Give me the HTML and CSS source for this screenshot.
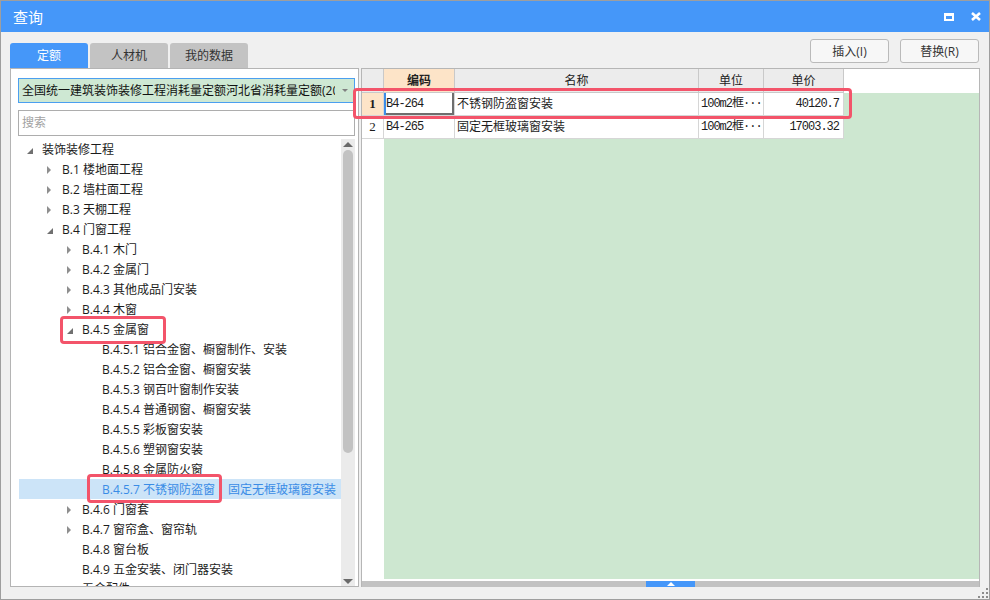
FILE: index.html
```html
<!DOCTYPE html>
<html lang="zh-CN">
<head>
<meta charset="utf-8">
<title>查询</title>
<link rel="stylesheet" href="styles.css">
</head>
<body>
<div class="window">
  <div class="titlebar">
    <span class="title">查询</span>
    <div class="win-btns">
      <svg class="ico" width="10" height="8" viewBox="0 0 10 8"><path d="M0 0H10V8H0Z M2 3V6H8V3Z" fill="#fff" fill-rule="evenodd"/></svg>
      <svg class="ico" width="10" height="9" viewBox="0 0 10 9"><path d="M1 1L9 8M9 1L1 8" stroke="#fff" stroke-width="2.6" fill="none"/></svg>
    </div>
  </div>
  <div class="main">
    <div class="left-col">
      <div class="tabs">
        <div class="tab active">定额</div>
        <div class="tab">人材机</div>
        <div class="tab">我的数据</div>
      </div>
      <div class="panel">
        <div class="combo">
          <span class="combo-text">全国统一建筑装饰装修工程消耗量定额河北省消耗量定额(2012)</span>
          <span class="combo-btn"><span class="tri-down"></span></span>
        </div>
        <div class="search">搜索</div>
        <div class="tree-wrap">
          <div class="tree">
            <div class="row l0"><span class="tog"><span class="exp"></span></span><span>装饰装修工程</span></div>
            <div class="row l1"><span class="tog"><span class="col"></span></span><span>B.1 楼地面工程</span></div>
            <div class="row l1"><span class="tog"><span class="col"></span></span><span>B.2 墙柱面工程</span></div>
            <div class="row l1"><span class="tog"><span class="col"></span></span><span>B.3 天棚工程</span></div>
            <div class="row l1"><span class="tog"><span class="exp"></span></span><span>B.4 门窗工程</span></div>
            <div class="row l2"><span class="tog"><span class="col"></span></span><span>B.4.1 木门</span></div>
            <div class="row l2"><span class="tog"><span class="col"></span></span><span>B.4.2 金属门</span></div>
            <div class="row l2"><span class="tog"><span class="col"></span></span><span>B.4.3 其他成品门安装</span></div>
            <div class="row l2"><span class="tog"><span class="col"></span></span><span>B.4.4 木窗</span></div>
            <div class="row l2"><span class="tog"><span class="exp"></span></span><span>B.4.5 金属窗</span></div>
            <div class="row l3"><span class="tog"></span><span>B.4.5.1 铝合金窗、橱窗制作、安装</span></div>
            <div class="row l3"><span class="tog"></span><span>B.4.5.2 铝合金窗、橱窗安装</span></div>
            <div class="row l3"><span class="tog"></span><span>B.4.5.3 钢百叶窗制作安装</span></div>
            <div class="row l3"><span class="tog"></span><span>B.4.5.4 普通钢窗、橱窗安装</span></div>
            <div class="row l3"><span class="tog"></span><span>B.4.5.5 彩板窗安装</span></div>
            <div class="row l3"><span class="tog"></span><span>B.4.5.6 塑钢窗安装</span></div>
            <div class="row l3"><span class="tog"></span><span>B.4.5.8 金属防火窗</span></div>
            <div class="row l3 sel"><span class="tog"></span><span>B.4.5.7 不锈钢防盗窗</span><span class="extra">固定无框玻璃窗安装</span></div>
            <div class="row l2"><span class="tog"><span class="col"></span></span><span>B.4.6 门窗套</span></div>
            <div class="row l2"><span class="tog"><span class="col"></span></span><span>B.4.7 窗帘盒、窗帘轨</span></div>
            <div class="row l2"><span class="tog"></span><span>B.4.8 窗台板</span></div>
            <div class="row l2"><span class="tog"></span><span>B.4.9 五金安装、闭门器安装</span></div>
            <div class="row l2 last"><span class="tog"></span><span>五金配件</span></div>
          </div>
          <div class="vscroll">
            <div class="sb-btn"><span class="sb-up"></span></div>
            <div class="sb-track"><div class="sb-thumb"></div></div>
            <div class="sb-btn"><span class="sb-down"></span></div>
          </div>
        </div>
      </div>
    </div>
    <div class="right-col">
      <div class="actions">
        <button class="btn">插入(I)</button>
        <button class="btn">替换(R)</button>
      </div>
      <div class="grid">
        <div class="ghead">
          <div class="hc c-num"></div>
          <div class="hc c-code cur">编码</div>
          <div class="hc c-name">名称</div>
          <div class="hc c-unit">单位</div>
          <div class="hc c-price">单价</div>
          <div class="hfill"></div>
        </div>
        <div class="grow">
          <div class="gc c-num rn cur">1</div>
          <div class="gc c-code mono focus">B4-264</div>
          <div class="gc c-name">不锈钢防盗窗安装</div>
          <div class="gc c-unit mono">100m2框···</div>
          <div class="gc c-price mono num">40120.7</div>
          <div class="gfill-green"></div>
        </div>
        <div class="grow">
          <div class="gc c-num rn">2</div>
          <div class="gc c-code mono">B4-265</div>
          <div class="gc c-name">固定无框玻璃窗安装</div>
          <div class="gc c-unit mono">100m2框···</div>
          <div class="gc c-price mono num">17003.32</div>
          <div class="gfill-green"></div>
        </div>
        <div class="gbody-fill">
          <div class="c-num"></div>
          <div class="gfill-green"></div>
        </div>
        <div class="gstrip"></div>
        <div class="hscroll"><div class="hthumb"><span class="hthumb-arrow"></span></div></div>
      </div>
    </div>
  </div>
  <div class="mark mark-row"></div>
  <div class="mark mark-node"></div>
  <div class="mark mark-sel"></div>
  <svg class="grip" width="10" height="10" viewBox="0 0 10 10"><g fill="#8c8c8c"><rect x="8" y="0" width="2" height="2"/><rect x="4" y="4" width="2" height="2"/><rect x="8" y="4" width="2" height="2"/><rect x="0" y="8" width="2" height="2"/><rect x="4" y="8" width="2" height="2"/><rect x="8" y="8" width="2" height="2"/></g></svg>
</div>
</body>
</html>
```

FILE: styles.css
```css
* { box-sizing: border-box; margin: 0; padding: 0; }
body {
  margin: 0;
  font-family: "Open Sans", "Noto Sans CJK SC", sans-serif;
  font-size: 12px;
  color: #1c1c1c;
  background: #fff;
}
.window {
  position: relative;
  width: 990px;
  height: 600px;
  border: 1px solid #9e9e9e;
  background: #f0f0f0;
  display: flex;
  flex-direction: column;
  overflow: hidden;
}
.titlebar {
  height: 31px;
  flex: none;
  background: #4597f9;
  color: #fff;
  display: flex;
  align-items: center;
  padding: 0 8px 0 12px;
}
.title { font-size: 15px; line-height: 20px; }
.win-btns { margin-left: auto; display: flex; align-items: center; gap: 17px; }
.ico { display: block; }

.main { display: flex; gap: 2px; padding-left: 9px; height: 555px; flex: none; }

.left-col { width: 349px; display: flex; flex-direction: column; }
.tabs { display: flex; gap: 2px; margin-top: 11px; height: 25px; flex: none; }
.tab {
  width: 78px;
  background: #c3c3c3;
  border-radius: 3px 3px 0 0;
  text-align: center;
  line-height: 25px;
  font-size: 12px;
  color: #333;
}
.tab.active { background: #4597f9; color: #fff; }

.panel {
  flex: 1;
  min-height: 0;
  background: #fff;
  border: 1px solid #b4b4b4;
  padding: 9px 3px 0 7px;
  display: flex;
  flex-direction: column;
}
.combo {
  height: 25px;
  flex: none;
  border: 1px solid #4b9ff0;
  background: #cee8d3;
  display: flex;
  align-items: center;
  padding-left: 3px;
}
.combo-text { flex: 1; white-space: nowrap; overflow: hidden; line-height: 23px; font-size: 12px; color: #111; }
.combo-btn { width: 19px; height: 23px; display: flex; align-items: center; justify-content: center; }
.tri-down { width: 0; height: 0; border-left: 3px solid transparent; border-right: 3px solid transparent; border-top: 3px solid #808080; }
.search {
  height: 26px;
  flex: none;
  margin-top: 7px;
  border: 1px solid #adadad;
  padding-left: 3px;
  line-height: 24px;
  color: #a2a2a2;
  font-size: 12px;
}
.tree-wrap { flex: 1; min-height: 0; margin-top: 3px; display: flex; }
.tree { flex: 1; min-width: 0; overflow: hidden; margin-left: 1px; }
.row { height: 20px; padding-top: 2px; display: flex; align-items: center; white-space: nowrap; line-height: 18px; font-size: 12px; }
.row.l0 { padding-left: 3px; }
.row.l1 { padding-left: 23px; }
.row.l2 { padding-left: 43px; }
.row.l3 { padding-left: 63px; }
.row.last { height: 14px; align-items: flex-start; line-height: 12px; padding-top: 4px; overflow: hidden; }
.tog { width: 20px; flex: none; display: flex; align-items: center; padding-left: 5px; }
.col { width: 0; height: 0; border-top: 4px solid transparent; border-bottom: 4px solid transparent; border-left: 4px solid #8e8e8e; }
.exp { width: 0; height: 0; border-left: 6px solid transparent; border-bottom: 6px solid #707070; margin-top: 2px; }
.row.sel { background: #cce4f8; color: #3a8ce6; }
.extra { margin-left: 13px; }

.vscroll { width: 14px; flex: none; background: #ebebeb; display: flex; flex-direction: column; }
.sb-btn { height: 10px; flex: none; display: flex; align-items: center; justify-content: center; }
.sb-up { width: 0; height: 0; border-left: 5px solid transparent; border-right: 5px solid transparent; border-bottom: 5px solid #6a6a6a; }
.sb-down { width: 0; height: 0; border-left: 5px solid transparent; border-right: 5px solid transparent; border-top: 5px solid #6a6a6a; }
.sb-track { flex: 1; padding: 1px 2px; }
.sb-thumb { height: 303px; background: #c2c2c2; border-radius: 5px; }

.right-col { width: 619px; display: flex; flex-direction: column; }
.actions { display: flex; justify-content: flex-end; gap: 11px; margin-top: 7px; height: 24px; padding-right: 1px; flex: none; }
.btn {
  width: 79px;
  height: 24px;
  border: 1px solid #bababa;
  border-radius: 3px;
  background: #f7f7f7;
  font-family: "Open Sans", "Noto Sans CJK SC", sans-serif;
  font-size: 12px;
  color: #333;
}
.grid {
  margin-top: 5px;
  flex: 1;
  min-height: 0;
  border: 1px solid #b6b6b6;
  border-bottom: none;
  background: #fff;
  display: flex;
  flex-direction: column;
}
.ghead { height: 24px; flex: none; display: flex; }
.hc {
  background: #ececec;
  border-right: 1px solid #c9c9c9;
  border-bottom: 1px solid #c9c9c9;
  text-align: center;
  line-height: 23px;
  font-size: 12px;
  color: #222;
}
.hc.cur { background: #fde4c8; font-weight: bold; }
.hfill { flex: 1; }
.c-num { width: 22px; flex: none; }
.c-code { width: 71px; flex: none; }
.c-name { width: 244px; flex: none; }
.c-unit { width: 65px; flex: none; }
.c-price { width: 80px; flex: none; }

.grow { height: 23px; flex: none; display: flex; }
.gc {
  background: #fff;
  border-right: 1px solid #d6d6d6;
  border-bottom: 1px solid #d6d6d6;
  line-height: 22px;
  padding: 0 2px;
  white-space: nowrap;
  overflow: hidden;
  font-size: 12px;
}
.gc.rn { text-align: center; font-family: "Liberation Serif", serif; font-size: 13px; padding: 0; }
.gc.rn.cur { background: #fde4c8; font-weight: bold; }
.mono { font-family: "Liberation Mono", "Noto Sans CJK SC", monospace; font-size: 12px; letter-spacing: -1px; }
.num { text-align: right; padding-right: 4px; }
.gc.focus { box-shadow: inset 2px 0 #3b8de8, inset -2px -2px #6e6e6e; }
.gfill-green { flex: 1; background: #cde7d0; }
.gbody-fill { flex: 1; display: flex; }
.gbody-fill .c-num { background: #fff; }
.gstrip { height: 2px; flex: none; background: #fff; }
.hscroll { height: 6px; flex: none; background: #c2c2c2; display: flex; }
.hthumb { margin-left: 284px; width: 49px; height: 6px; background: #4597f9; display: flex; align-items: center; justify-content: center; }
.hthumb-arrow { width: 0; height: 0; border-left: 4px solid transparent; border-right: 4px solid transparent; border-bottom: 4px solid #fff; }

.mark { position: absolute; border: 3px solid #f3546a; border-radius: 4px; }
.mark-row { left: 352px; top: 87px; width: 499px; height: 31px; }
.mark-node { left: 59px; top: 315px; width: 106px; height: 28px; }
.mark-sel { left: 86px; top: 473px; width: 135px; height: 29px; }
.grip { position: absolute; right: 1px; bottom: 1px; }
```
